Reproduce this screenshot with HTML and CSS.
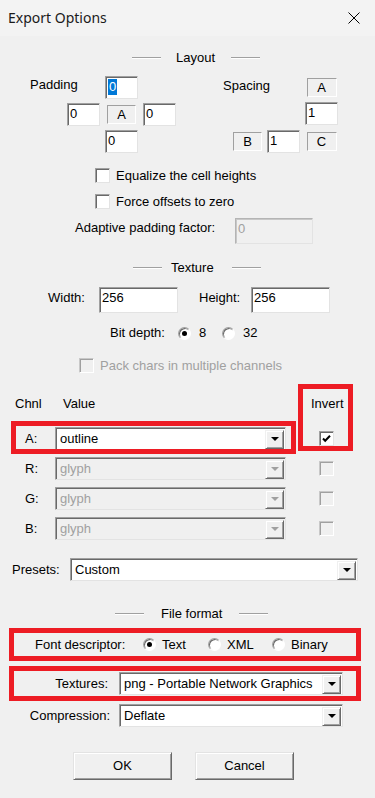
FILE: index.html
```html
<!DOCTYPE html>
<html lang="en">
<head>
    <meta charset="UTF-8">
    <meta name="viewport" content="width=device-width, initial-scale=1.0">
    <title>Export Options</title>
    <link rel="stylesheet" href="styles.css">
</head>
<body>
    <div class="titlebar">
        <span class="title">Export Options</span>
        <svg class="close" width="12" height="12" viewBox="0 0 12 12"><path d="M0.5 0.5L11.5 11.5M11.5 0.5L0.5 11.5" stroke="#000" stroke-width="1" fill="none"/></svg>
    </div>

    <!-- Layout -->
    <div class="sep sep-layout"><i></i><span>Layout</span><i></i></div>
    <div class="spacing">
        <div class="pad-grid">
            <span class="pad-lbl">Padding</span>
            <div class="edit pad-top"><span class="sel">0</span></div>
            <div class="edit pad-left">0</div>
            <div class="tag pad-mid">A</div>
            <div class="edit pad-right">0</div>
            <div class="edit pad-bottom">0</div>
        </div>
        <div class="spc-grid">
            <span class="spc-lbl">Spacing</span>
            <div class="tag spc-a">A</div>
            <div class="edit spc-top">1</div>
            <div class="tag spc-b">B</div>
            <div class="edit spc-mid">1</div>
            <div class="tag spc-c">C</div>
        </div>
    </div>
    <div class="check-row eq"><span class="cb"></span><span>Equalize the cell heights</span></div>
    <div class="check-row force"><span class="cb"></span><span>Force offsets to zero</span></div>
    <div class="adaptive">
        <span class="adaptive-lbl">Adaptive padding factor:</span>
        <div class="edit big disabled">0</div>
    </div>

    <!-- Texture -->
    <div class="sep sep-texture"><i></i><span>Texture</span><i></i></div>
    <div class="size-row">
        <span class="size-lbl">Width:</span>
        <div class="edit big">256</div>
        <span class="size-lbl height-lbl">Height:</span>
        <div class="edit big">256</div>
    </div>
    <div class="bit-row">
        <span class="bit-lbl">Bit depth:</span>
        <span class="opt"><span class="rb on"></span>8</span>
        <span class="opt"><span class="rb"></span>32</span>
    </div>
    <div class="check-row pack"><span class="cb off"></span><span class="gray">Pack chars in multiple channels</span></div>

    <div class="channels">
        <div class="ch-head"><span class="ch-c1">Chnl</span><span class="ch-c2">Value</span><span>Invert</span></div>
        <div class="ch-row">
            <span class="ch-lbl">A:</span>
            <div class="combo ch-combo"><span class="val">outline</span><span class="drop"></span></div>
            <span class="cb inv"><svg width="13" height="13" viewBox="0 0 13 13"><path d="M3 6.5L5.2 8.8L10 3.8" stroke="#000" stroke-width="2" fill="none"/></svg></span>
        </div>
        <div class="ch-row">
            <span class="ch-lbl">R:</span>
            <div class="combo ch-combo disabled"><span class="val">glyph</span><span class="drop"></span></div>
            <span class="cb inv off"></span>
        </div>
        <div class="ch-row">
            <span class="ch-lbl">G:</span>
            <div class="combo ch-combo disabled"><span class="val">glyph</span><span class="drop"></span></div>
            <span class="cb inv off"></span>
        </div>
        <div class="ch-row">
            <span class="ch-lbl">B:</span>
            <div class="combo ch-combo disabled"><span class="val">glyph</span><span class="drop"></span></div>
            <span class="cb inv off"></span>
        </div>
        <div class="mark mark-a"></div>
        <div class="mark mark-inv"></div>
    </div>

    <div class="presets">
        <span class="presets-lbl">Presets:</span>
        <div class="combo presets-combo"><span class="val">Custom</span><span class="drop"></span></div>
    </div>

    <!-- File format -->
    <div class="sep sep-file"><i></i><span>File format</span><i></i></div>
    <div class="hl fd-row">
        <span class="fd-lbl">Font descriptor:</span>
        <span class="opt fd-opt"><span class="rb on"></span>Text</span>
        <span class="opt fd-opt"><span class="rb"></span>XML</span>
        <span class="opt fd-opt"><span class="rb"></span>Binary</span>
    </div>
    <div class="hl tex-row">
        <span class="form-lbl tex-lbl">Textures:</span>
        <div class="combo form-combo"><span class="val">png - Portable Network Graphics</span><span class="drop"></span></div>
    </div>
    <div class="comp-row">
        <span class="form-lbl">Compression:</span>
        <div class="combo form-combo"><span class="val">Deflate</span><span class="drop"></span></div>
    </div>

    <div class="buttons">
        <button class="btn">OK</button>
        <button class="btn">Cancel</button>
    </div>
</body>
</html>
```

FILE: styles.css
```css
body {
    margin: 0;
    min-height: 798px;
    background-color: #f0f0f0;
    font-family: "Liberation Sans", Arial, sans-serif;
    font-size: 13px;
    line-height: 16px;
    color: #000;
}
.titlebar {
    display: flex;
    align-items: center;
    justify-content: space-between;
    height: 36px;
    padding: 0 15px 0 8px;
    background-color: #f3f3f3;
}
.title {
    font-family: "Noto Sans", sans-serif;
    font-size: 14px;
    color: #1a1a1a;
}

/* group separators */
.sep {
    display: flex;
    align-items: center;
    height: 16px;
}
.sep i {
    width: 29px;
    border-top: 1px solid #a0a0a0;
    border-bottom: 1px solid #fff;
}
.sep-layout {
    margin-top: 14px;
    padding-left: 132px;
}
.sep-layout span {
    margin: 0 16px 0 15px;
}
.sep-texture {
    margin-top: 16px;
    padding-left: 133px;
}
.sep-texture span {
    margin: 0 18px 0 9px;
}
.sep-file {
    margin-top: 25px;
    padding-left: 115px;
}
.sep-file span {
    margin: 0 17px;
}

/* controls */
.edit {
    box-sizing: border-box;
    width: 33px;
    height: 23px;
    padding: 2px 0 0 2px;
    background-color: #fff;
    border: 1px solid;
    border-color: #a0a0a0 #e3e3e3 #e3e3e3 #a0a0a0;
    box-shadow: inset 1px 1px 0 #696969;
}
.edit.big {
    width: 79px;
    height: 26px;
}
.edit.disabled {
    background-color: #f0f0f0;
    color: #a0a0a0;
    border-color: #b4b4b4 #e3e3e3 #e3e3e3 #b4b4b4;
    box-shadow: inset 1px 1px 0 #c8c8c8;
}
.sel {
    display: inline-block;
    padding: 0 1px;
    background-color: #0078d7;
    color: #fff;
}
.tag {
    box-sizing: border-box;
    width: 30px;
    height: 19px;
    align-self: center;
    justify-self: center;
    text-align: center;
    line-height: 17px;
    border: 1px solid;
    border-color: #a0a0a0 #fff #fff #a0a0a0;
}
.cb {
    display: inline-flex;
    box-sizing: border-box;
    width: 15px;
    height: 15px;
    background-color: #fff;
    border: 1px solid;
    border-color: #a0a0a0 #e3e3e3 #e3e3e3 #a0a0a0;
    box-shadow: inset 1px 1px 0 #696969;
}
.cb svg {
    margin: 0;
}
.cb.off {
    background-color: #f0f0f0;
    border-color: #c8c8c8 #fff #fff #c8c8c8;
    box-shadow: inset 1px 1px 0 #a0a0a0;
}
.rb {
    position: relative;
    box-sizing: border-box;
    width: 13px;
    height: 13px;
    border-radius: 50%;
    background-color: #fff;
    border: 1px solid;
    border-color: #a0a0a0 #fff #fff #a0a0a0;
    box-shadow: inset 1px 1px 0 #696969;
}
.rb.on::after {
    content: "";
    position: absolute;
    left: 3px;
    top: 3px;
    width: 5px;
    height: 5px;
    border-radius: 50%;
    background-color: #000;
}
.opt {
    display: flex;
    align-items: center;
    gap: 8px;
    width: 44px;
}
.gray {
    color: #a0a0a0;
}
.combo {
    display: flex;
    align-items: center;
    box-sizing: border-box;
    height: 23px;
    padding: 1px 1px 0 4px;
    background-color: #fff;
    border: 1px solid;
    border-color: #a0a0a0 #e3e3e3 #e3e3e3 #a0a0a0;
    box-shadow: inset 1px 1px 0 #696969;
}
.combo .val {
    flex: 1;
    white-space: nowrap;
    overflow: hidden;
}
.drop {
    display: flex;
    align-items: center;
    justify-content: center;
    box-sizing: border-box;
    width: 19px;
    height: 19px;
    background-color: #f0f0f0;
    border: 1px solid;
    border-color: #f0f0f0 #696969 #696969 #f0f0f0;
    box-shadow: inset 1px 1px 0 #fff, inset -1px -1px 0 #a0a0a0;
}
.drop::after {
    content: "";
    border-left: 4px solid transparent;
    border-right: 4px solid transparent;
    border-top: 4px solid #000;
}
.combo.disabled {
    background-color: #f0f0f0;
    color: #a0a0a0;
}
.combo.disabled .drop::after {
    border-top-color: #a0a0a0;
}

/* layout group */
.spacing {
    display: flex;
    margin-top: 10px;
    padding-left: 30px;
}
.pad-grid {
    display: grid;
    grid-template-columns: 32px 33px 33px 33px;
    grid-template-rows: repeat(3, 23px);
    gap: 4px 5px;
}
.pad-lbl {
    grid-column: 1 / 3;
    grid-row: 1;
    margin-top: 1px;
}
.pad-top { grid-column: 3; grid-row: 1; }
.pad-left { grid-column: 2; grid-row: 2; }
.pad-mid { grid-column: 3; grid-row: 2; width: 29px; }
.pad-right { grid-column: 4; grid-row: 2; }
.pad-bottom { grid-column: 3; grid-row: 3; }
.spc-grid {
    display: grid;
    grid-template-columns: 39px 33px 33px;
    grid-template-rows: repeat(3, 23px);
    gap: 4px 5px;
    margin-left: 47px;
}
.spc-lbl {
    grid-column: 1 / 3;
    grid-row: 1;
    margin-top: 2px;
}
.spc-a { grid-column: 3; grid-row: 1; }
.spc-top { grid-column: 3; grid-row: 2; margin-top: -1px; }
.spc-b { grid-column: 1; grid-row: 3; justify-self: end; width: 29px; }
.spc-mid { grid-column: 2; grid-row: 3; }
.spc-c { grid-column: 3; grid-row: 3; }
.check-row {
    display: flex;
    align-items: center;
    gap: 6px;
    height: 15px;
}
.eq {
    margin-top: 15px;
    padding-left: 95px;
}
.force {
    margin-top: 11px;
    padding-left: 95px;
}
.adaptive {
    display: flex;
    margin-top: 9px;
    padding-left: 75px;
}
.adaptive-lbl {
    width: 160px;
    margin-top: 2px;
}
.adaptive .edit {
    width: 78px;
}

/* texture group */
.size-row {
    display: flex;
    margin-top: 11px;
    padding-left: 48px;
}
.size-lbl {
    width: 51px;
    margin-top: 3px;
}
.height-lbl {
    width: 52px;
    margin-left: 21px;
}
.bit-row {
    display: flex;
    align-items: center;
    height: 16px;
    margin-top: 12px;
    padding-left: 110px;
}
.bit-lbl {
    width: 68px;
}
.pack {
    margin-top: 17px;
    padding-left: 79px;
}

/* channels */
.channels {
    position: relative;
    margin-top: 23px;
}
.ch-head {
    display: flex;
    height: 16px;
    padding-left: 15px;
}
.ch-c1 { width: 48px; }
.ch-c2 { width: 248px; }
.ch-row {
    display: flex;
    align-items: center;
    height: 23px;
    margin-top: 7px;
    padding-left: 25px;
}
.ch-row:nth-child(2) {
    margin-top: 15px;
}
.ch-lbl {
    width: 30px;
}
.ch-combo {
    width: 231px;
}
.inv {
    margin-left: 33px;
}
.mark {
    position: absolute;
    box-sizing: border-box;
    border: 5px solid #ed1c24;
}
.mark-a {
    left: 11px;
    top: 25px;
    width: 285px;
    height: 33px;
}
.mark-inv {
    left: 298px;
    top: -12px;
    width: 55px;
    height: 67px;
}
.presets {
    display: flex;
    align-items: center;
    margin-top: 18px;
    padding-left: 12px;
}
.presets-lbl {
    width: 58px;
}
.presets-combo {
    width: 288px;
}

/* file format */
.hl {
    box-sizing: border-box;
    width: 352px;
    margin-left: 9px;
    border: 5px solid #ed1c24;
}
.fd-row {
    display: flex;
    align-items: center;
    height: 33px;
    margin-top: 6px;
    padding-left: 21px;
}
.fd-lbl {
    width: 108px;
}
.fd-opt {
    gap: 6px;
    width: 65px;
}
.fd-opt + .fd-opt {
    width: 64px;
}
.tex-row {
    display: flex;
    align-items: center;
    height: 35px;
    margin-top: 5px;
}
.form-lbl {
    width: 110px;
    text-align: right;
}
.tex-lbl {
    width: 94px;
}
.form-combo {
    width: 224px;
    margin-left: 9px;
}
.tex-row .form-combo {
    margin-left: 11px;
}
.comp-row {
    display: flex;
    align-items: center;
    margin-top: 3px;
}
.buttons {
    display: flex;
    gap: 23px;
    margin-top: 25px;
    padding-left: 73px;
}
.btn {
    box-sizing: border-box;
    width: 99px;
    height: 28px;
    padding: 0;
    font: inherit;
    color: #000;
    background-color: #f0f0f0;
    border: 1px solid;
    border-color: #e3e3e3 #696969 #696969 #e3e3e3;
    box-shadow: inset 1px 1px 0 #fff, inset -1px -1px 0 #a0a0a0;
}
```
